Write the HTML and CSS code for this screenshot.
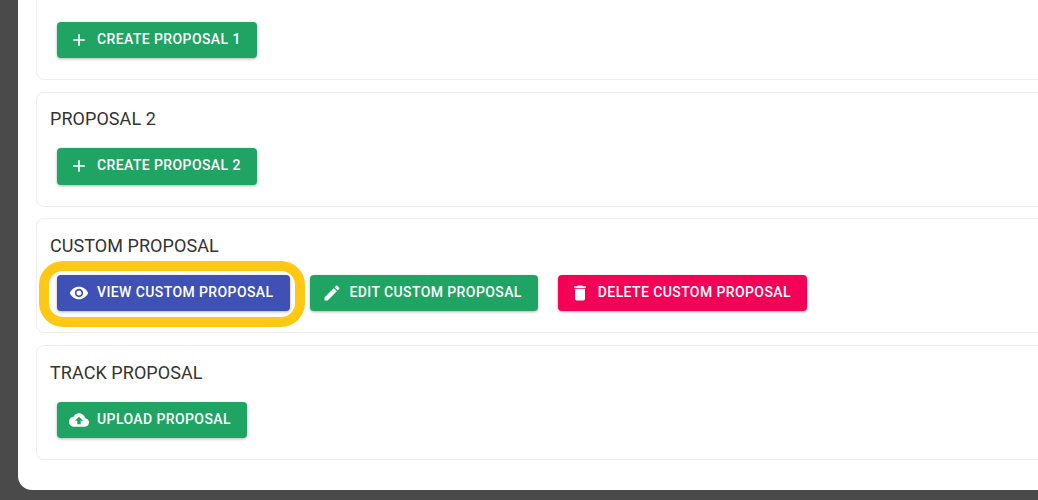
FILE: index.html
```html
<!DOCTYPE html>
<html lang="en">
<head>
<meta charset="utf-8">
<title>Proposals</title>
<link rel="stylesheet" href="styles.css">
</head>
<body>
<main class="panel">
  <section class="card card-first">
    <div class="actions">
      <button class="btn green"><svg class="icon" viewBox="0 0 24 24"><path d="M19 13h-6v6h-2v-6H5v-2h6V5h2v6h6v2z"/></svg><span class="label">Create Proposal 1</span></button>
    </div>
  </section>
  <section class="card">
    <h2 class="title">Proposal 2</h2>
    <div class="actions">
      <button class="btn green"><svg class="icon" viewBox="0 0 24 24"><path d="M19 13h-6v6h-2v-6H5v-2h6V5h2v6h6v2z"/></svg><span class="label">Create Proposal 2</span></button>
    </div>
  </section>
  <section class="card">
    <h2 class="title">Custom Proposal</h2>
    <div class="actions">
      <button class="btn indigo highlighted"><svg class="icon" viewBox="0 0 24 24"><path d="M12 4.5C7 4.5 2.73 7.61 1 12c1.73 4.39 6 7.5 11 7.5s9.27-3.11 11-7.5c-1.73-4.39-6-7.5-11-7.5zM12 17c-2.76 0-5-2.24-5-5s2.24-5 5-5 5 2.24 5 5-2.24 5-5 5zm0-8c-1.66 0-3 1.34-3 3s1.34 3 3 3 3-1.34 3-3-1.34-3-3-3z"/></svg><span class="label">View Custom Proposal</span></button>
      <button class="btn green"><svg class="icon" viewBox="0 0 24 24"><path d="M3 17.25V21h3.75L17.81 9.94l-3.75-3.75L3 17.25zM20.71 7.04c.39-.39.39-1.02 0-1.41l-2.34-2.34c-.39-.39-1.02-.39-1.41 0l-1.83 1.83 3.75 3.75 1.83-1.83z"/></svg><span class="label">Edit Custom Proposal</span></button>
      <button class="btn pink"><svg class="icon" viewBox="0 0 24 24"><path d="M6 19c0 1.1.9 2 2 2h8c1.1 0 2-.9 2-2V7H6v12zM19 4h-3.5l-1-1h-5l-1 1H5v2h14V4z"/></svg><span class="label">Delete Custom Proposal</span></button>
    </div>
  </section>
  <section class="card">
    <h2 class="title">Track Proposal</h2>
    <div class="actions">
      <button class="btn green"><svg class="icon" viewBox="0 0 24 24"><path d="M19.35 10.04C18.67 6.59 15.64 4 12 4 9.11 4 6.6 5.64 5.35 8.04 2.34 8.36 0 10.91 0 14c0 3.31 2.69 6 6 6h13c2.76 0 5-2.24 5-5 0-2.64-2.05-4.78-4.65-4.96zM14 13v4h-4v-4H7l5-5 5 5h-3z"/></svg><span class="label">Upload Proposal</span></button>
    </div>
  </section>
</main>
</body>
</html>
```

FILE: styles.css
```css
* { box-sizing: border-box; }
html, body { height: 100%; }
body {
  margin: 0;
  background: #4a4a4a;
  overflow: hidden;
  font-family: Roboto, "Liberation Sans", sans-serif;
}
.panel {
  width: 1020px;
  height: 490px;
  margin-left: 18px;
  padding: 0 0 0 18px;
  background: #fff;
  border-bottom-left-radius: 14px;
  overflow: hidden;
  display: flex;
  flex-direction: column;
  gap: 11.94px;
}
.card {
  flex: none;
  width: 1020px;
  height: 114.6px;
  padding: 14.55px 13px 0;
  border: 1px solid #eeeeee;
  border-radius: 8px;
  background: #fff;
}
.card-first {
  margin-top: -34.6px;
  padding-top: 38.55px;
}
.title {
  margin: 0;
  height: 24px;
  line-height: 24px;
  font-size: 18px;
  font-weight: 400;
  letter-spacing: 0.06px;
  color: #333;
  text-transform: uppercase;
}
.actions {
  display: flex;
  gap: 20px;
  margin-top: 16.98px;
  padding-left: 7px;
}
.btn {
  position: relative;
  display: inline-flex;
  align-items: center;
  height: 36.06px;
  padding: 0 16px 0 12px;
  border: 0;
  border-radius: 4px;
  color: #fff;
  font-family: inherit;
  font-size: 14px;
  line-height: 16px;
  font-weight: 500;
  letter-spacing: 0.4px;
  text-transform: uppercase;
  white-space: nowrap;
  box-shadow: 0 1px 3px rgba(0,0,0,.3);
}
.label {
  margin-bottom: 2px;
}
.icon {
  width: 20px;
  height: 20px;
  margin-right: 8px;
  fill: #fff;
  flex: none;
}
.green { background: #20a464; }
.indigo { background: #3f51b5; }
.pink { background: #f50057; }
.highlighted::after {
  content: "";
  position: absolute;
  inset: -14px -15px -16px -18px;
  border: 10px solid #ffc815;
  border-radius: 24px;
  pointer-events: none;
}
```
